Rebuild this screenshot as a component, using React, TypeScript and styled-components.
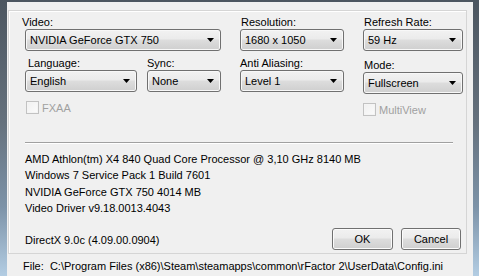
import React from 'react';
import styled, { createGlobalStyle } from 'styled-components';

const GlobalStyle = createGlobalStyle`
  html, body {
    margin: 0;
    padding: 0;
    background: #f0f0f0;
  }
`;

const Window = styled.div`
  display: flex;
  width: 479px;
  height: 276px;
  box-sizing: border-box;
  padding: 2px 6px 0 7px;
  background: linear-gradient(180deg, #4c5660 0%, #66727e 45%, #7d93a8 75%, #b3cde3 100%);
  font-family: 'Liberation Sans', Arial, sans-serif;
  font-size: 11px;
  color: #000;
  overflow: hidden;
`;

const Client = styled.div`
  flex: 1;
  display: flex;
  flex-direction: column;
  background: #f0f0f0;
  padding: 8px 6px 0 1px;
`;

const Panel = styled.div`
  display: flex;
  flex-direction: column;
  border: 1px solid #d5d5d5;
  box-shadow: inset 1px 1px 0 #ffffff;
  padding: 4px 3px 3px 16px;
`;

const Top = styled.div`
  display: flex;
  gap: 19px;
`;

const Column = styled.div<{ $width: number }>`
  display: flex;
  flex-direction: column;
  gap: 5px;
  width: ${(p) => p.$width}px;
`;

const Pair = styled.div`
  display: flex;
  gap: 10px;
`;

const Field = styled.div<{ $width?: number; $shift?: number }>`
  display: flex;
  flex-direction: column;
  width: ${(p) => (p.$width ? `${p.$width}px` : 'auto')};
  margin-top: ${(p) => p.$shift ?? 0}px;
`;

const Label = styled.div<{ $indent?: number }>`
  height: 14px;
  line-height: 14px;
  margin-left: ${(p) => p.$indent ?? 0}px;
  white-space: nowrap;
`;

const Combo = styled.div`
  display: flex;
  align-items: center;
  justify-content: space-between;
  height: 22px;
  box-sizing: border-box;
  padding: 0 6px 0 4px;
  border: 1px solid #707070;
  border-radius: 3px;
  background: linear-gradient(180deg, #f2f2f2 0%, #ebebeb 45%, #dddddd 50%, #cfcfcf 100%);
  box-shadow: inset 0 0 0 1px #f8f8f8;
  white-space: nowrap;
`;

const Arrow = styled.svg`
  flex: none;
  width: 7px;
  height: 4px;
`;

const Check = styled.div<{ $offset?: number }>`
  display: flex;
  align-items: center;
  gap: 3px;
  margin-top: 4px;
  margin-left: ${(p) => p.$offset ?? 0}px;
  color: #a0a0a0;
  height: 13px;
`;

const Box = styled.span`
  width: 13px;
  height: 13px;
  box-sizing: border-box;
  border: 1px solid #c2c2c2;
  background: linear-gradient(135deg, #f0f0f0 0%, #fbfbfb 100%);
  box-shadow: inset 0 0 0 1px #f4f4f4;
`;

const Separator = styled.div`
  width: 428px;
  height: 1px;
  margin-top: 26px;
  background: #a0a0a0;
  border-bottom: 1px solid #ffffff;
`;

const Info = styled.div`
  margin-top: 7px;
  line-height: 16.4px;
  white-space: nowrap;
`;

const Footer = styled.div`
  display: flex;
  align-items: center;
  margin-top: 11px;
  padding-right: 2px;
`;

const Version = styled.div`
  flex: 1;
  margin-top: 2px;
`;

const Buttons = styled.div`
  display: flex;
  gap: 8px;
`;

const Button = styled.div<{ $width: number }>`
  display: flex;
  align-items: center;
  justify-content: center;
  width: ${(p) => p.$width}px;
  height: 22px;
  box-sizing: border-box;
  border: 1px solid #707070;
  border-radius: 3px;
  background: linear-gradient(180deg, #f2f2f2 0%, #ebebeb 45%, #dddddd 50%, #cfcfcf 100%);
  box-shadow: inset 0 0 0 1px #fbfbfb;
`;

const StatusBar = styled.div`
  padding: 5px 0 0 15px;
  line-height: 14px;
  white-space: nowrap;
`;

const Select = ({ value }: { value: string }) => (
  <Combo>
    <span>{value}</span>
    <Arrow viewBox="0 0 7 4">
      <polygon points="0,0 7,0 3.5,4" fill="#000" />
    </Arrow>
  </Combo>
);

export default function App() {
  return (
    <>
      <GlobalStyle />
      <Window>
        <Client>
          <Panel>
            <Top>
              <Column $width={196}>
                <Field>
                  <Label $indent={-3}>Video:</Label>
                  <Select value="NVIDIA GeForce GTX 750" />
                </Field>
                <Pair>
                  <Field $width={112}>
                    <Label $indent={3}>Language:</Label>
                    <Select value="English" />
                  </Field>
                  <Field $width={74}>
                    <Label>Sync:</Label>
                    <Select value="None" />
                  </Field>
                </Pair>
                <Check $offset={1}>
                  <Box />
                  FXAA
                </Check>
              </Column>
              <Column $width={104}>
                <Field>
                  <Label $indent={1}>Resolution:</Label>
                  <Select value="1680 x 1050" />
                </Field>
                <Field>
                  <Label>Anti Aliasing:</Label>
                  <Select value="Level 1" />
                </Field>
              </Column>
              <Column $width={100}>
                <Field>
                  <Label $indent={1}>Refresh Rate:</Label>
                  <Select value="59 Hz" />
                </Field>
                <Field $shift={2}>
                  <Label $indent={1}>Mode:</Label>
                  <Select value="Fullscreen" />
                </Field>
                <Check $offset={0}>
                  <Box />
                  MultiView
                </Check>
              </Column>
            </Top>
            <Separator />
            <Info>
              <div>AMD Athlon(tm) X4 840 Quad Core Processor @ 3,10 GHz 8140 MB</div>
              <div>Windows 7 Service Pack 1 Build 7601</div>
              <div>NVIDIA GeForce GTX 750 4014 MB</div>
              <div>Video Driver v9.18.0013.4043</div>
            </Info>
            <Footer>
              <Version>DirectX 9.0c (4.09.00.0904)</Version>
              <Buttons>
                <Button $width={61}>OK</Button>
                <Button $width={60}>Cancel</Button>
              </Buttons>
            </Footer>
          </Panel>
          <StatusBar>File:&nbsp; C:\Program Files (x86)\Steam\steamapps\common\rFactor 2\UserData\Config.ini</StatusBar>
        </Client>
      </Window>
    </>
  );
}
